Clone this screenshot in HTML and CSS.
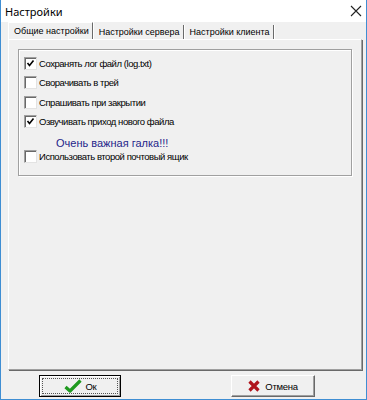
FILE: index.html
```html
<!DOCTYPE html>
<html>
<head>
<meta charset="utf-8">
<link rel="stylesheet" href="styles.css">
</head>
<body>
<div class="window">
  <div class="titlebar">
    <span class="title">Настройки</span>
    <svg class="close" width="12" height="12" viewBox="0 0 12 12"><path d="M1 1L11 11M11 1L1 11" stroke="#222" stroke-width="1.1"/></svg>
  </div>
  <div class="body">
    <div class="tabs">
      <div class="tab active">Общие настройки</div>
      <div class="tab">Настройки сервера</div>
      <div class="tab">Настройки клиента</div>
    </div>
    <div class="panel">
      <div class="group">
        <label class="row"><span class="cb checked"><svg width="9" height="9" viewBox="0 0 9 9"><path d="M1.5 4L3.5 6.5L7.5 1.5" stroke="#000" stroke-width="1.6" fill="none"/></svg></span>Сохранять лог файл (log.txt)</label>
        <label class="row"><span class="cb"></span>Сворачивать в трей</label>
        <label class="row"><span class="cb"></span>Спрашивать при закрытии</label>
        <label class="row"><span class="cb checked"><svg width="9" height="9" viewBox="0 0 9 9"><path d="M1.5 4L3.5 6.5L7.5 1.5" stroke="#000" stroke-width="1.6" fill="none"/></svg></span>Озвучивать приход нового файла</label>
        <div class="note">Очень важная галка!!!</div>
        <label class="row last"><span class="cb"></span>Использовать второй почтовый ящик</label>
      </div>
    </div>
    <div class="buttons">
      <button class="btn default"><span class="focus"><svg width="18" height="14" viewBox="0 0 18 14"><path d="M1.5 8L6 12L16.5 1.5" stroke="#1f9a1f" stroke-width="3.2" fill="none" stroke-linejoin="round"/></svg>Ок</span></button>
      <button class="btn cancel"><svg width="12" height="12" viewBox="0 0 12 12"><path d="M1.5 1.5L10.5 10.5M10.5 1.5L1.5 10.5" stroke="#b0141c" stroke-width="3.2"/></svg>Отмена</button>
    </div>
  </div>
</div>
</body>
</html>
```

FILE: styles.css
```css
html, body {
  margin: 0;
  padding: 0;
  background: #f0f0f0;
}
.window {
  width: 367px;
  height: 400px;
  box-sizing: border-box;
  border: 1px solid #3f8ed3;
  border-top: none;
  display: flex;
  flex-direction: column;
  font-family: "Liberation Sans", Arial, sans-serif;
  font-size: 9.5px;
  letter-spacing: -0.45px;
  color: #000;
}
.titlebar {
  height: 22px;
  background: #fff;
  display: flex;
  align-items: center;
  justify-content: space-between;
  padding: 0 4px 0 4px;
}
.title {
  font-family: "Noto Sans", sans-serif;
  font-size: 11px;
  letter-spacing: 0;
  color: #000;
}
.body {
  flex: 1;
  background: #f0f0f0;
  display: flex;
  flex-direction: column;
  padding: 1px 3px 0 7px;
}
.tabs {
  display: flex;
  height: 16px;
  align-items: flex-end;
  font-size: 9px;
  letter-spacing: 0;
}
.tab {
  height: 14px;
  line-height: 14px;
  padding: 0 3px 0 4px;
  border-right: 1px solid #6a6a6a;
  box-shadow: 1px 0 0 #fff;
  margin-right: 2px;
  white-space: nowrap;
}
.tab.active {
  height: 16px;
  line-height: 16px;
  padding: 0 3px 0 5px;
  border-left: 1px solid #fff;
  border-top: 1px solid #fff;
}
.panel {
  height: 331px;
  box-sizing: border-box;
  border-left: 1px solid #fff;
  border-top: 1px solid #fff;
  border-right: 1px solid #a0a0a0;
  border-bottom: 1px solid #a0a0a0;
  box-shadow: 1px 1px 0 #696969;
  width: 354px;
  padding: 9px 9px 0 9px;
}
.group {
  height: 127px;
  box-sizing: border-box;
  border: 1px solid #a0a0a0;
  box-shadow: inset 1px 1px 0 #fff, 1px 1px 0 #fff;
  padding: 4px 0 0 5px;
  display: flex;
  flex-direction: column;
}
.row {
  display: flex;
  align-items: center;
  height: 19.3px;
  white-space: nowrap;
}
.cb {
  width: 13px;
  height: 13px;
  box-sizing: border-box;
  background: #fff;
  border: 1px solid;
  border-color: #a0a0a0 #e3e3e3 #e3e3e3 #a0a0a0;
  box-shadow: inset 1px 1px 0 #696969;
  margin-right: 2px;
  display: flex;
  align-items: center;
  justify-content: center;
}
.note {
  font-size: 11px;
  letter-spacing: 0;
  color: #1f1f8a;
  padding-left: 32px;
  height: 17px;
  line-height: 24px;
}
.row.last {
  height: 16px;
}
.buttons {
  display: flex;
  padding: 5px 0 0 31px;
}
.btn {
  font-family: "Liberation Sans", Arial, sans-serif;
  font-size: 9.5px;
  letter-spacing: -0.3px;
  height: 22px;
  box-sizing: border-box;
  background: #f0f0f0;
  border: 1px solid;
  border-color: #fff #696969 #696969 #fff;
  display: flex;
  align-items: center;
  justify-content: center;
  gap: 5px;
  padding: 0;
  color: #000;
}
.btn.default {
  width: 82px;
  border: 1px solid #000;
  box-shadow: inset 1px 1px 0 #fff, inset -1px -1px 0 #a0a0a0;
}
.focus {
  display: flex;
  align-items: center;
  justify-content: center;
  gap: 4px;
  width: 74px;
  height: 14px;
  border: 1px dotted #555;
}
.btn.cancel {
  width: 84px;
  margin-left: 110px;
  box-shadow: inset -1px -1px 0 #a0a0a0;
}
```
